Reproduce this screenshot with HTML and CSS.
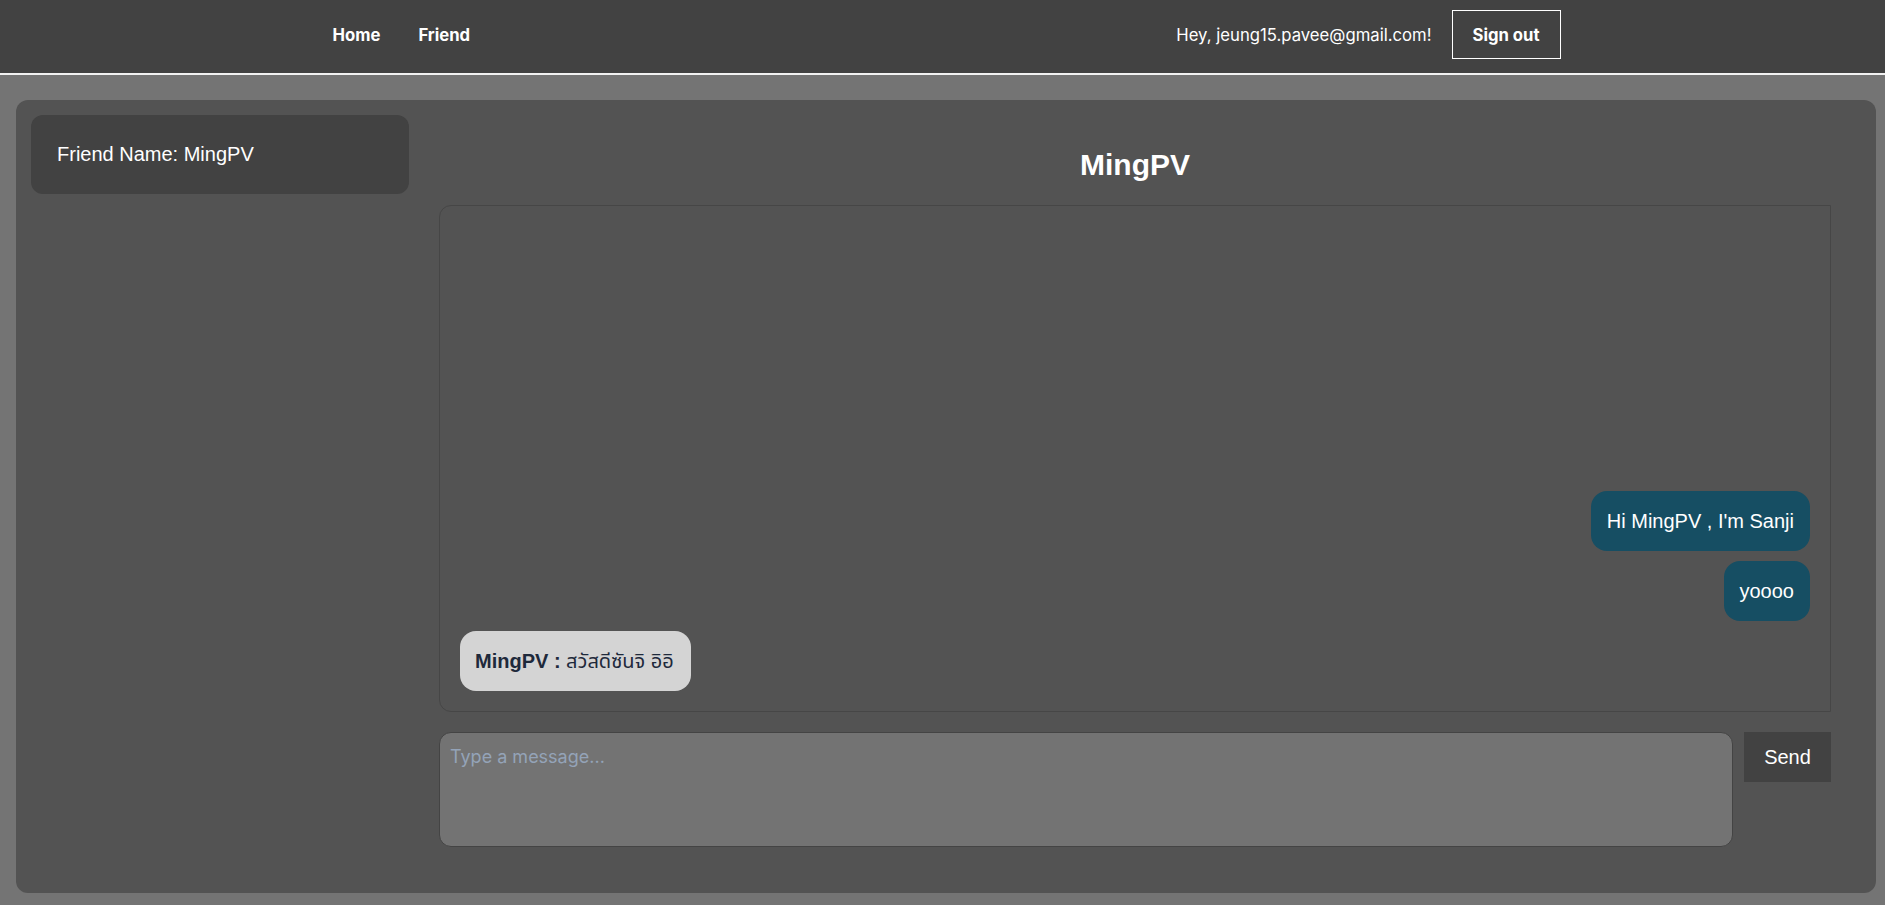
FILE: index.html
```html
<!DOCTYPE html>
<html lang="en">
<head>
<meta charset="utf-8">
<title>Chat</title>
<link rel="stylesheet" href="styles.css">
</head>
<body>
<header class="topbar">
  <div class="topbar-inner">
    <nav class="nav">
      <a class="nav-link" href="#">Home</a>
      <a class="nav-link" href="#">Friend</a>
    </nav>
    <div class="user">
      <span class="greeting">Hey, jeung15.pavee@gmail.com!</span>
      <button class="signout">Sign out</button>
    </div>
  </div>
</header>
<main class="main">
  <section class="card">
    <aside class="sidebar">
      <div class="friend-box">Friend Name: MingPV</div>
    </aside>
    <div class="chat">
      <h1 class="chat-title">MingPV</h1>
      <div class="messages">
        <div class="bubble sent">Hi MingPV , I'm Sanji</div>
        <div class="bubble sent">yoooo</div>
        <div class="bubble received"><b>MingPV :</b> สวัสดีซันจิ อิอิ</div>
      </div>
      <div class="composer">
        <textarea class="input" placeholder="Type a message..."></textarea>
        <button class="send">Send</button>
      </div>
    </div>
  </section>
</main>
</body>
</html>
```
FILE: styles.css
```css
* { box-sizing: border-box; }
html, body { height: 100%; }
body {
  margin: 0;
  background: #747474;
  font-family: "Liberation Sans", Arial, "Noto Sans Thai", "Noto Sans", sans-serif;
  color: #fff;
  overflow: hidden;
}
.topbar {
  height: 75px;
  background: #424242;
  border-bottom: 2px solid #f2f2f2;
}
.topbar-inner {
  max-width: 1280px;
  margin: 0 auto;
  padding: 10px 22px 14px 30px;
  height: 73px;
  display: flex;
  align-items: center;
  justify-content: space-between;
  font-family: Inter, "Liberation Sans", sans-serif;
  font-size: 16.7px;
}
.nav { display: flex; gap: 38px; }
.nav-link {
  color: #fff;
  text-decoration: none;
  font-weight: 700;
}
.user { display: flex; align-items: center; gap: 20px; }
.greeting { color: #fff; }
.signout {
  height: 49px;
  width: 109px;
  background: transparent;
  border: 1px solid #fff;
  color: #fff;
  font-family: Inter, "Liberation Sans", sans-serif;
  font-size: 16.7px;
  font-weight: 700;
  padding: 0;
}
.main {
  padding: 25px 9px 12px 16px;
}
.card {
  height: 793px;
  background: #535353;
  border-radius: 12px;
  display: flex;
  gap: 30px;
  padding: 15px 45px 46px 15px;
}
.sidebar { width: 378px; flex: none; }
.friend-box {
  height: 79px;
  background: #424242;
  border-radius: 12px;
  display: flex;
  align-items: center;
  padding-left: 26px;
  font-size: 20px;
}
.chat {
  flex: 1;
  display: flex;
  flex-direction: column;
}
.chat-title {
  margin: 32px 0 22px;
  font-size: 30px;
  line-height: 36px;
  font-weight: 700;
  text-align: center;
}
.messages {
  height: 507px;
  border: 1px solid #464646;
  border-radius: 12px 0 0 12px;
  padding: 20px;
  display: flex;
  flex-direction: column;
  justify-content: flex-end;
  gap: 10px;
}
.bubble {
  font-size: 20px;
  line-height: 28px;
  padding: 16px;
  border-radius: 16px;
}
.sent {
  align-self: flex-end;
  background: #164e63;
  color: #fff;
}
.received {
  align-self: flex-start;
  background: #d4d4d4;
  color: #1e293b;
  padding: 16px 17px 16px 15px;
}
.composer {
  margin-top: 20px;
  display: flex;
  gap: 11px;
  align-items: flex-start;
}
.input {
  flex: 1;
  height: 115px;
  background: #737373;
  border: 1px solid #444;
  border-radius: 12px;
  padding: 10px;
  font-family: Inter, "Liberation Sans", sans-serif;
  font-size: 18px;
  line-height: 28px;
  color: #fff;
  resize: none;
  outline: none;
}
.input::placeholder { color: #94a3b8; }
.send {
  width: 87px;
  height: 50px;
  background: #424242;
  border: none;
  color: #fff;
  font-family: "Liberation Sans", Arial, sans-serif;
  font-size: 20px;
  padding: 0;
}
```
